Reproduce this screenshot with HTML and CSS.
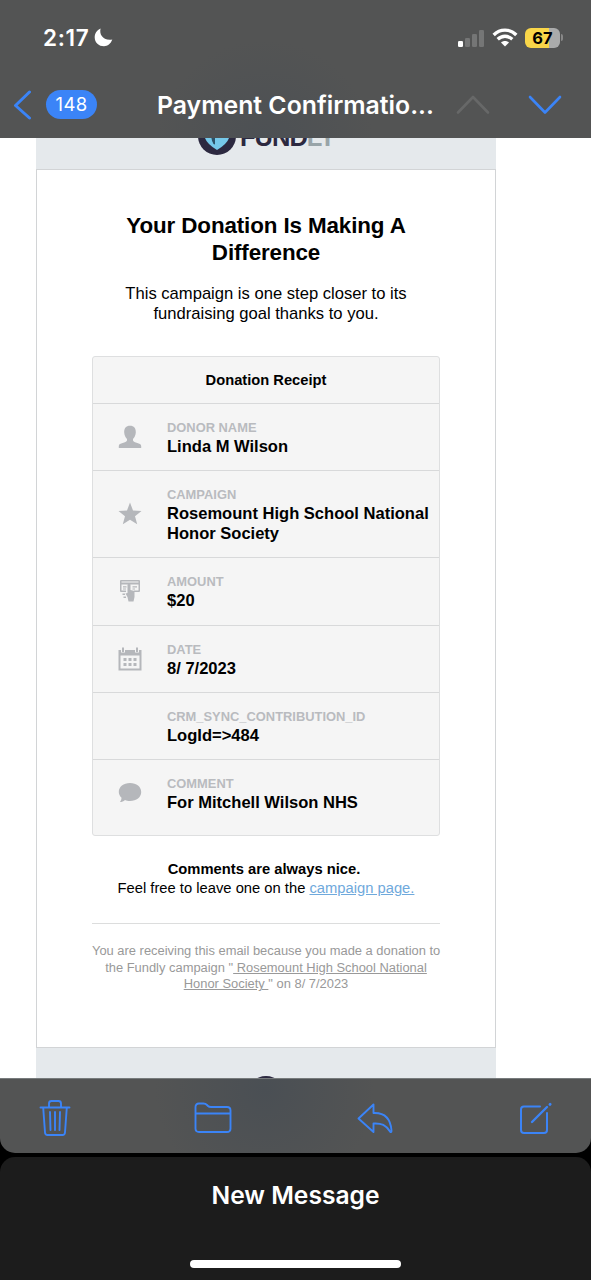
FILE: index.html
```html
<!DOCTYPE html>
<html lang="en">
<head>
<meta charset="utf-8">
<title>Payment Confirmation</title>
<link rel="stylesheet" href="styles.css">
</head>
<body>
<div class="screen">
  <header class="top">
    <div class="status">
      <span class="time">2:17</span>
      <svg class="moon" width="19" height="19" viewBox="0 0 19 19"><path fill="#fff" d="M6.600.6C5 6.500 9 13 18.300 11.600 16.600 16 13.700 18.300 10 18.300 4.800 18.300.7 14.500.7 9.500.7 5.600 2.900 2.200 6.600.6z"/></svg>
      <svg class="signal" width="27" height="18" viewBox="0 0 27 18"><rect x="0" y="12" width="5" height="6" rx="1.300" fill="#fff"/><g fill="#757676"><rect x="7" y="9" width="5" height="9" rx="1.300"/><rect x="14" y="5" width="5" height="13" rx="1.300"/><rect x="21" y="1" width="5" height="17" rx="1.300"/></g></svg>
      <svg class="wifi" width="26" height="19" viewBox="0 0 26 19"><g fill="none" stroke="#fff" stroke-width="3.300"><path d="M1.700 7C8 .4 18 .4 24.300 7"/><path d="M5.700 11.300C10 7.200 16 7.200 20.300 11.300"/></g><path fill="#fff" d="M9 14.600C11.300 12.600 14.700 12.600 17 14.600L13 18.500z"/></svg>
      <div class="battery"><span>67</span></div>
      <i class="cap"></i>
    </div>
    <nav class="nav">
      <svg class="back" width="19" height="30" viewBox="0 0 19 30"><path d="M16.500 2L2.500 15.500 16.500 28" fill="none" stroke="#3b84f7" stroke-width="3" stroke-linecap="round" stroke-linejoin="round"/></svg>
      <span class="count">148</span>
      <h2 class="subject">Payment Confirmatio...</h2>
      <svg class="up" width="34" height="20" viewBox="0 0 34 20"><path d="M2 17.500L17 2 32 17.500" fill="none" stroke="#676868" stroke-width="2.600" stroke-linecap="round" stroke-linejoin="round"/></svg>
      <svg class="down" width="34" height="20" viewBox="0 0 34 20"><path d="M2 2L17 17.500 32 2" fill="none" stroke="#3b84f7" stroke-width="2.600" stroke-linecap="round" stroke-linejoin="round"/></svg>
    </nav>
  </header>

  <main class="mail">
    <div class="letter">
      <div class="band band-top">
        <svg class="mark" width="38" height="38" viewBox="0 0 38 38"><circle cx="19" cy="19" r="19" fill="#2c2940"/><path d="M7 12Q19 3 31 12V21Q29 27 19 33 9 27 7 21z" fill="#75c8e9"/><path d="M14 14Q12 21 15.500 27L17 27.500V21Q22 21 24 15z" fill="#2c5268"/></svg>
        <span class="word">FUND<b>LY</b></span>
      </div>
      <section class="card">
        <h1>Your Donation Is Making A<br>Difference</h1>
        <p class="intro">This campaign is one step closer to its<br>fundraising goal thanks to you.</p>
        <div class="receipt">
          <div class="caption">Donation Receipt</div>
          <div class="row">
            <svg class="icon" width="24" height="24" viewBox="0 0 24 24"><path d="M12 .8C8 .8 6 3.500 6.200 7.500 6.400 10.500 7.500 12.500 9 14V15.500C8.500 18 .8 17.500.8 21V23H23.200V21C23.200 17.500 15.500 18 15 15.500V14C16.500 12.500 17.600 10.500 17.800 7.500 18 3.500 16 .8 12 .8z"/></svg>
            <div class="entry"><span class="label">DONOR NAME</span><strong>Linda M Wilson</strong></div>
          </div>
          <div class="row two">
            <svg class="icon" width="24" height="24" viewBox="0 0 24 24"><path d="M12 .5L15 8.500 23.500 9 17 14.300 19.200 22.300 12 17.800 4.800 22.300 7 14.300.5 9 9 8.500z"/></svg>
            <div class="entry"><span class="label">CAMPAIGN</span><strong>Rosemount High School National<br>Honor Society</strong></div>
          </div>
          <div class="row">
            <svg class="icon" width="24" height="24" viewBox="0 0 24 24"><path fill-rule="evenodd" d="M3 1H21Q22 1 22 2V12Q22 13 21 13H16V11.500H20.500V5.500H3.500V11.500H8V13H3Q2 13 2 12V2Q2 1 3 1zM3.500 2.500V3.500H20.500V2.500z"/><path d="M9.500 5.500Q11 4 12.500 5.500V11L16.500 12V18L15.500 22.500H10.500L9.500 18 7.500 14.500 9.500 14z"/><path d="M5 7.200H8.500V8.400H5zM14.500 7.200H19V8.400H14.500zM5 9.500H8V10.500H5zM4.500 14.500H7V16H4.500zM5.500 17.500H8V19H5.500zM14.500 9.500H17V10.500H14.500z"/></svg>
            <div class="entry"><span class="label">AMOUNT</span><strong>$20</strong></div>
          </div>
          <div class="row">
            <svg class="icon" width="24" height="24" viewBox="0 0 24 24"><path fill-rule="evenodd" d="M.5 3H3V5.500H7V3H17V5.500H21V3H23.500V23.500H.5zM2.500 8.500V21.500H21.500V8.500z"/><path d="M4 .5H6V5H4zM18 .5H20V5H18zM5.500 11H8.500V14H5.500zM10.500 11H13.500V14H10.500zM15.500 11H18.500V14H15.500zM5.500 16H8.500V19H5.500zM10.500 16H13.500V19H10.500zM15.500 16H18.500V19H15.500z"/></svg>
            <div class="entry"><span class="label">DATE</span><strong>8/ 7/2023</strong></div>
          </div>
          <div class="row">
            <div class="icon"></div>
            <div class="entry"><span class="label">CRM_SYNC_CONTRIBUTION_ID</span><strong>LogId=&gt;484</strong></div>
          </div>
          <div class="row last">
            <svg class="icon" width="24" height="24" viewBox="0 0 24 24"><path d="M12 2C18.500 2 23.200 5.800 23.200 11S18.500 20 12 20C10 20 8.500 19.700 7 19 5.500 20.500 3.800 21 2 21 3 19.800 3.400 18.500 3.500 16.800 1.800 15 .8 13 .8 11 .8 5.800 5.500 2 12 2z"/></svg>
            <div class="entry"><span class="label">COMMENT</span><strong>For Mitchell Wilson NHS</strong></div>
          </div>
        </div>
        <p class="nice"><strong>Comments are always nice.</strong><br>Feel free to leave one on the <a>campaign page.</a></p>
        <p class="why">You are receiving this email because you made a donation to<br>the Fundly campaign "<u> Rosemount High School National</u><br><u>Honor Society </u>" on 8/ 7/2023</p>
      </section>
      <div class="band band-bottom"><i class="seal"></i></div>
    </div>
  </main>

  <footer class="tools">
    <svg width="32" height="38" viewBox="0 0 32 38"><g fill="none" stroke="#3b84f7" stroke-width="1.900" stroke-linecap="round" stroke-linejoin="round"><path d="M1.500 8.500H30.500M4.200 8.500L6 33.500Q6.200 36 8.500 36H23.500Q25.800 36 26 33.500L27.800 8.500M10 8V4.500Q10 2 12.500 2H19.500Q22 2 22 4.500V8M11 13L11.500 31M16 13V31M21 13L20.500 31"/></g></svg>
    <svg class="folder" width="38" height="32" viewBox="0 0 38 32"><path d="M1.500 11.500H36.500M1.500 26.500V5Q1.500 1.500 5 1.500H9.500Q11.500 1.500 13 3L14 4Q15 5 17 5H33Q36.500 5 36.500 8.500V26.500Q36.500 30 33 30H5Q1.500 30 1.500 26.500z" fill="none" stroke="#3b84f7" stroke-width="1.900"/></svg>
    <svg class="reply" width="36" height="31" viewBox="0 0 36 31"><path d="M16.500 1.500L1.500 15.500 16.500 29V20.500C24.500 20 29 22 33 28.500Q34.500 30 34.500 27.500C33.500 15 27 9.500 16.500 10z" fill="none" stroke="#3b84f7" stroke-width="1.900" stroke-linejoin="round"/></svg>
    <svg width="33" height="33" viewBox="0 0 33 33"><g fill="none" stroke="#3b84f7" stroke-width="2" stroke-linecap="round"><path d="M21 4.500H5Q2 4.500 2 7.500V28Q2 31 5 31H25Q28 31 28 28V11"/><path d="M13 20L28 5" stroke-width="2.400"/><path d="M31 2.400L31.100 2.300" stroke-width="2.800"/></g></svg>
  </footer>

  <div class="sheet">
    <span class="compose">New Message</span>
    <i class="home"></i>
  </div>
</div>
</body>
</html>
```
FILE: styles.css
```css
* { box-sizing: border-box; }
body { margin: 0; background: #000; }
h1, h2, p { margin: 0; }
svg { display: block; flex: none; }

.screen {
  width: 591px;
  height: 1280px;
  display: flex;
  flex-direction: column;
  overflow: hidden;
  background: #000;
  font-family: "Liberation Sans", Arial, sans-serif;
}

/* status and navigation bars */
.top {
  flex: none;
  height: 138px;
  background: radial-gradient(circle at 265px 150px, #4c5054 0, rgba(83, 84, 84, 0) 110px), #535454;
  color: #fff;
  font-family: Inter, sans-serif;
}
.status { display: flex; align-items: center; height: 75px; padding-left: 43px; }
.time { width: 51px; font-size: 22.500px; font-weight: 600; letter-spacing: .7px; }
.signal { margin-left: 345px; }
.wifi { margin-left: 7px; }
.battery {
  width: 35px;
  height: 20px;
  margin-left: 7px;
  border-radius: 6px;
  background: linear-gradient(90deg, #f9d649 24px, #aaabab 24px);
  color: #000;
  font-size: 16.500px;
  font-weight: 700;
  line-height: 20px;
  text-align: center;
}
.cap { width: 2px; height: 7px; margin-left: 1px; border-radius: 0 2px 2px 0; background: #888; }
.nav { display: flex; align-items: center; height: 59px; padding-left: 13px; }
.count {
  width: 51px;
  height: 29px;
  margin-left: 14px;
  border-radius: 15px;
  background: #3b84f7;
  font-size: 18.500px;
  line-height: 29px;
  letter-spacing: .3px;
  text-align: center;
}
.subject { width: 299px; padding-left: 60px; font-size: 24.800px; font-weight: 600; line-height: 30px; white-space: nowrap; }
.up { margin-left: 60px; }
.down { margin-left: 38px; }

/* message body */
.mail { flex: none; height: 940px; background: #fff; overflow: hidden; }
.letter { width: 460px; margin: -21px 0 0 36px; color: #000; }
.band { display: flex; background: #e5e9ec; }
.band-top { height: 52px; padding-left: 162px; }
.word { margin: 6px 0 0 4px; font-size: 25.500px; font-weight: 700; line-height: 29px; letter-spacing: -1px; color: #2c2940; }
.word b { color: #98a4a8; }
.band-bottom { height: 52px; justify-content: center; padding-top: 28px; }
.seal { width: 38px; height: 38px; border-radius: 50%; background: #2c2940; }
.card { height: 879px; padding: 42px 55px 0; border: 1px solid #d2d4d6; background: #fff; text-align: center; white-space: nowrap; }
h1 { font-size: 22.400px; line-height: 27px; letter-spacing: -.12px; }
.intro { margin-top: 18px; font-size: 16.600px; line-height: 20px; }
.receipt { height: 480px; margin-top: 32px; border: 1px solid #dedfe0; border-radius: 3px; background: #f5f5f5; text-align: left; }
.caption { height: 46px; font-size: 14.700px; font-weight: 700; line-height: 47px; text-align: center; }
.row { display: flex; height: 67.200px; padding: 15px 0 0 25px; border-top: 1px solid #d8d9da; }
.two { height: 87.200px; }
.two .icon { margin-top: 16px; }
.icon { width: 24px; height: 24px; margin-top: 6px; fill: #b5b7bb; }
.entry { display: flex; flex-direction: column; margin-left: 25px; }
.label { font-size: 12.900px; font-weight: 700; line-height: 18px; color: #b9bbbf; }
.entry strong { font-size: 16.550px; line-height: 20px; }
.nice { margin-top: 24px; font-size: 14.750px; line-height: 18.500px; }
.nice strong { margin-right: 4px; }
.nice a { color: #6fa9dc; text-decoration: underline; }
.why { margin-top: 26px; padding-top: 19px; border-top: 1px solid #dcdddd; font-size: 12.920px; line-height: 16.700px; color: #999; }

/* bottom toolbar */
.tools {
  flex: none;
  display: flex;
  justify-content: space-between;
  align-items: center;
  height: 75px;
  padding: 4px 39px 0;
  border-top: 1px solid #777b7c;
  border-radius: 0 0 15px 15px;
  background: radial-gradient(circle at 265px 10px, #4a4f54 0, rgba(83, 84, 84, 0) 110px), #535454;
}
.folder, .reply { margin-right: 1.500px; margin-left: -1.500px; }

/* collapsed draft sheet */
.sheet {
  flex: none;
  display: flex;
  flex-direction: column;
  align-items: center;
  height: 124px;
  margin-top: 4px;
  padding-top: 23px;
  border-radius: 15px 15px 0 0;
  background: #1c1c1c;
  color: #fff;
  font-family: Inter, sans-serif;
}
.compose { font-size: 24.600px; font-weight: 600; line-height: 30px; }
.home { width: 211px; height: 8px; margin-top: 50px; border-radius: 4px; background: #fff; }
```
